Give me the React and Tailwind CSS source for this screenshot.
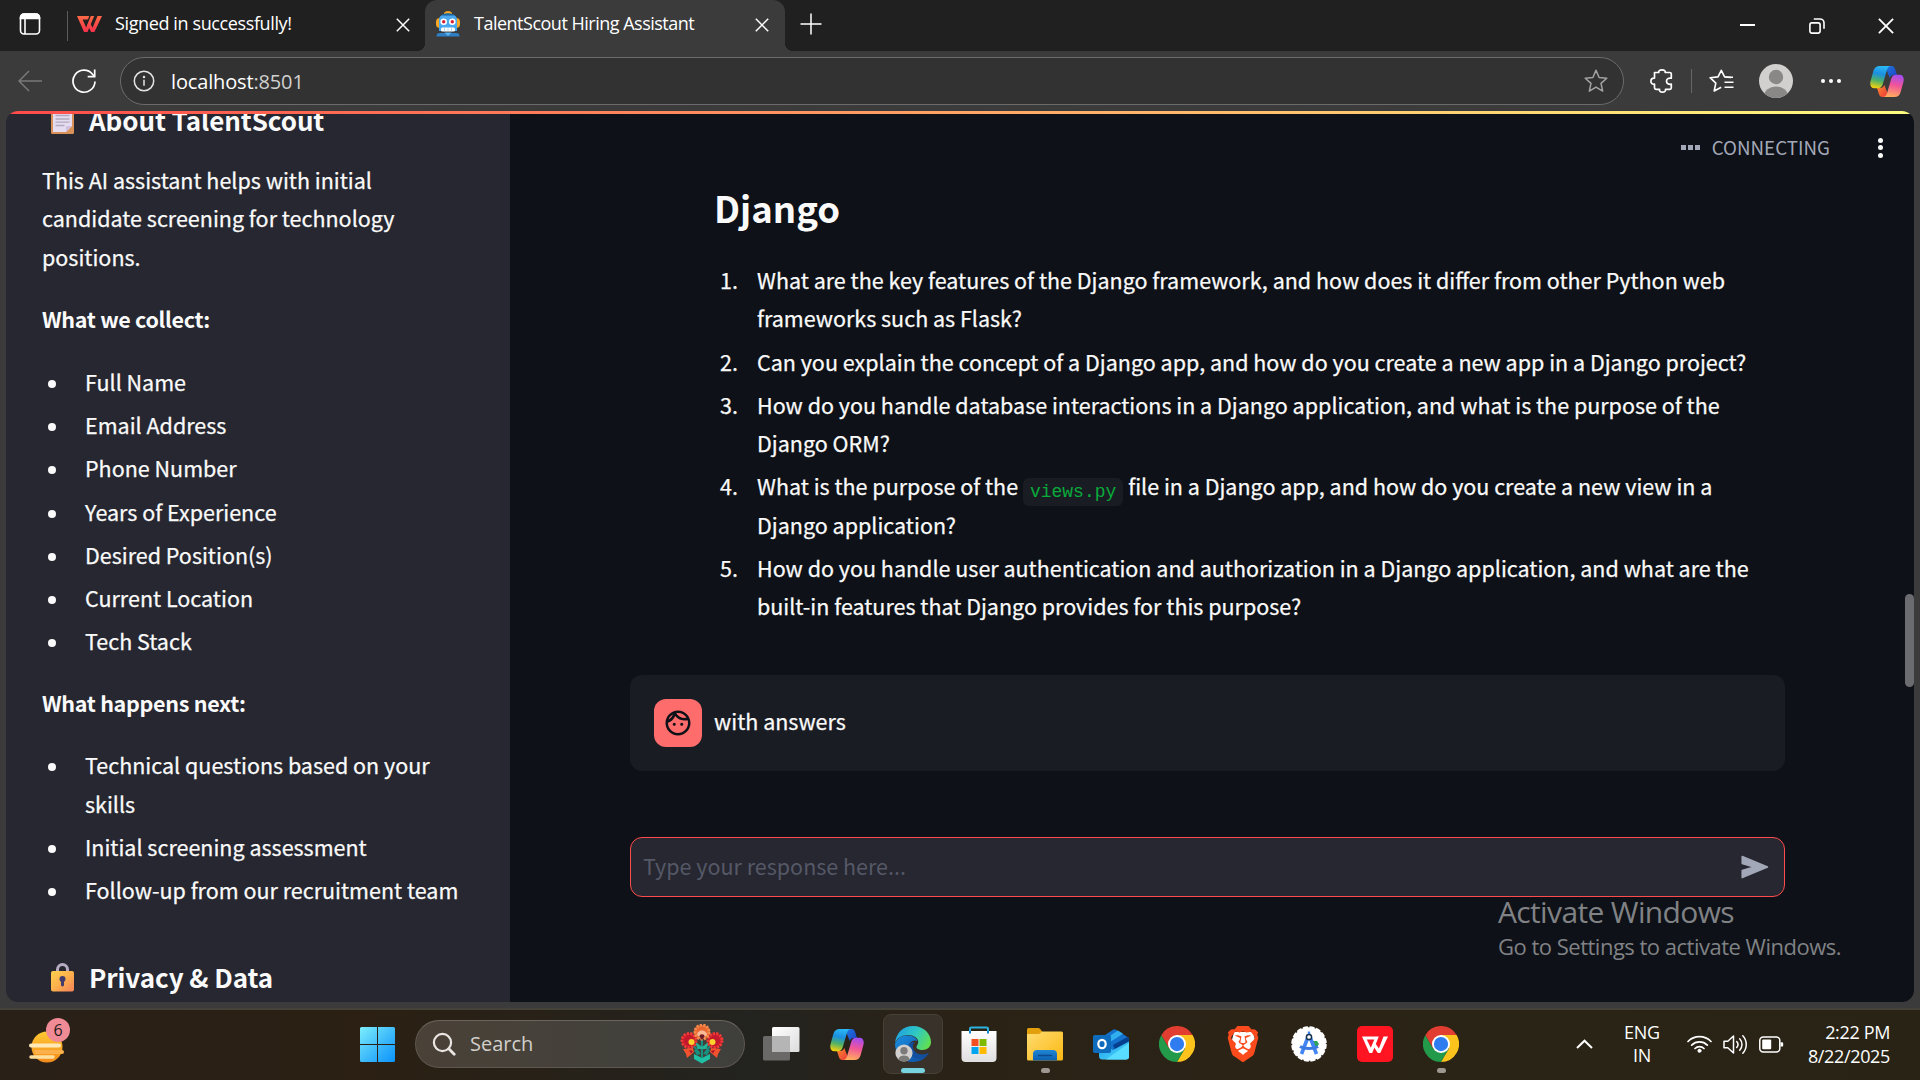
import { MdOutlineFace } from "react-icons/md";
import { SiBrave } from "react-icons/si";

const SOURCE = "font-['Noto_Sans_CJK_SC','Source_Sans_Pro',sans-serif]";
const SEGOE = "font-['Open_Sans','Segoe_UI',sans-serif]";

/* ---------- browser chrome icons ---------- */

const WorkspaceIcon = () => (
  <svg width="22" height="22" viewBox="0 0 22 22" fill="none" stroke="#fff" strokeWidth="1.6">
    <rect x="1.500" y="1" width="19" height="20" rx="3.5" />
    <path d="M1.500 5.500V4.500a3.500 3.500 0 0 1 3.500-3.500h12a3.500 3.500 0 0 1 3.500 3.500v1z" fill="#fff" />
    <path d="M6 5.500v15.500" />
  </svg>
);

const WpsMark = () => (
  <svg width="25" height="18" viewBox="0 0 25 18" fill="none">
    <defs>
      <linearGradient id="wps" x1="0" y1="0" x2="0" y2="1">
        <stop offset="0" stopColor="#ff6a45" />
        <stop offset="1" stopColor="#f5304c" />
      </linearGradient>
    </defs>
    <path d="M0 1h12.2l-1.2 3.4H5.6l3.6 8.2L13.800 1h3.400L10.500 17H7z" fill="url(#wps)" />
    <path d="M12 6.500l3.600 6.300L20.500 1H25l-7.600 16h-3.300L10.500 9.800z" fill="url(#wps)" />
  </svg>
);

const CloseIcon = ({ size = 14, w = 1.5 }) => (
  <svg width={size} height={size} viewBox="0 0 14 14" stroke="#fff" strokeWidth={w}>
    <path d="M.8.8l12.400 12.400M13.200.8L.8 13.200" />
  </svg>
);

const RobotIcon = () => (
  <svg width="26" height="26" viewBox="0 0 26 26">
    <rect x="1" y="7" width="24" height="10" rx="4" fill="#f5a623" />
    <path d="M9 2.500C9 1 11 0 13 0s4 1 4 2.500V5H9z" fill="#f5a623" />
    <path d="M4 9c0-4 3.500-6.500 9-6.500S22 5 22 9v11H4z" fill="#4aa8ee" />
    <path d="M6 4.500C8 3 10 2.500 13 2.500s5 .5 7 2z" fill="#1f5f9c" />
    <circle cx="8.700" cy="10.700" r="3.300" fill="#fff" />
    <circle cx="17.300" cy="10.700" r="3.300" fill="#fff" />
    <circle cx="8.700" cy="10.700" r="1.700" fill="#d6203a" />
    <circle cx="17.300" cy="10.700" r="1.700" fill="#d6203a" />
    <rect x="6" y="16.500" width="14" height="4" rx="1.500" fill="#fff" />
    <path d="M9.500 16.500v4M13 16.500v4M16.500 16.500v4" stroke="#9ec9ee" strokeWidth=".8" />
    <path d="M1.500 25.500c0-2.500 1-3.500 3.500-3.500h16c2.500 0 3.500 1 3.500 3.500z" fill="#2f7fc6" />
    <path d="M9.500 21.500h7L13 25z" fill="#59b4f2" />
  </svg>
);

const PlusIcon = () => (
  <svg width="22" height="22" viewBox="0 0 22 22" stroke="#fff" strokeWidth="1.5">
    <path d="M11 .5v21M.5 11h21" />
  </svg>
);

const RestoreIcon = () => (
  <svg width="16" height="16" viewBox="0 0 16 16" fill="none" stroke="#fff" strokeWidth="1.600">
    <rect x=".9" y="4.900" width="10.200" height="10.200" rx="2" />
    <path d="M4.800 1h6.200a4 4 0 0 1 4 4v5.800" />
  </svg>
);

const BackIcon = () => (
  <svg width="24" height="22" viewBox="0 0 24 22" fill="none" stroke="#7a7a7a" strokeWidth="1.500">
    <path d="M11 1L1 11l10 10M1 11h23" />
  </svg>
);

const ReloadIcon = () => (
  <svg width="26" height="26" viewBox="0 0 26 26" fill="none" stroke="#fff" strokeWidth="1.700">
    <path d="M24 13.500A11 11 0 1 1 21.500 6.200L23.500 8.500" />
    <path d="M23.700 1.500v7.200h-7" />
  </svg>
);

const InfoIcon = () => (
  <svg width="22" height="22" viewBox="0 0 22 22" fill="none" stroke="#e4e4e4" strokeWidth="1.500">
    <circle cx="11" cy="11" r="9.700" />
    <path d="M11 9.800v6" />
    <circle cx="11" cy="7" r=".5" fill="#e4e4e4" />
  </svg>
);

const STAR = "M12 1.300l3.100 7.200 7.700.7-5.800 5.200 1.700 7.700L12 18.100l-6.700 4 1.700-7.700L1.200 9.200l7.700-.7z";

const StarIcon = () => (
  <svg width="24" height="24" viewBox="0 0 24 24" fill="none" stroke="#a3a3a3" strokeWidth="1.500" strokeLinejoin="round">
    <path d={STAR} />
  </svg>
);

const PuzzleIcon = () => (
  <svg width="23" height="24" viewBox="0 0 23 24" fill="none" stroke="#fff" strokeWidth="1.700" strokeLinejoin="round">
    <path d="M4.500 3.500h4.300C8.300 1.800 9.600.9 12 .9s3.700.9 3.200 2.600h4.600a1.500 1.500 0 0 1 1.500 1.500v4.200c-2.600-.5-4.800.6-4.800 3s2.200 3.500 4.800 3v3.600a1.500 1.500 0 0 1-1.500 1.500h-4.300c.3 1.700-.8 2.800-3 2.800s-3.300-1.100-3-2.800H6a1.500 1.500 0 0 1-1.500-1.500v-3.600C2.400 15.600.9 14.400.9 12.200s1.500-3.400 3.600-3z" />
  </svg>
);

const FavoritesIcon = () => (
  <svg width="25" height="24" viewBox="0 0 25 24" fill="none" stroke="#fff" strokeWidth="1.600" strokeLinejoin="round">
    <path d="M22 8.500l-6.400-.6L12.300 1.300 9 7.900l-7.900.8 5.700 5.400L5.200 22l7-3.700" />
    <path d="M16.500 8.200H24M15.500 13.200H24.500M15.500 18.200H24.500" />
  </svg>
);

const AvatarIcon = () => (
  <svg width="34" height="34" viewBox="0 0 34 34">
    <defs>
      <clipPath id="avatarClip"><circle cx="17" cy="17" r="17" /></clipPath>
    </defs>
    <g clipPath="url(#avatarClip)">
      <rect width="34" height="34" fill="#d2d0ce" />
      <circle cx="17" cy="13" r="7.200" fill="#8a8886" />
      <ellipse cx="17" cy="32" rx="12" ry="9.500" fill="#8a8886" />
    </g>
  </svg>
);

const CopilotIcon = () => (
  <svg width="34" height="31" viewBox="0 0 34 31">
    <defs>
      <linearGradient id="cpA" x1=".5" y1="0" x2=".3" y2="1">
        <stop offset="0" stopColor="#2bb8f5" />
        <stop offset=".35" stopColor="#1b8fe0" />
        <stop offset=".65" stopColor="#4cb06a" />
        <stop offset="1" stopColor="#f7d10c" />
      </linearGradient>
      <linearGradient id="cpB" x1=".6" y1="0" x2=".4" y2="1">
        <stop offset="0" stopColor="#a44df0" />
        <stop offset=".45" stopColor="#f0549a" />
        <stop offset="1" stopColor="#ffae5c" />
      </linearGradient>
      <linearGradient id="cpC" x1="0" y1="0" x2="1" y2="1">
        <stop offset="0" stopColor="#1f77dc" />
        <stop offset="1" stopColor="#1c3fc4" />
      </linearGradient>
      <linearGradient id="cpD" x1="0" y1="0" x2="1" y2="1">
        <stop offset="0" stopColor="#f98b2b" />
        <stop offset="1" stopColor="#ee3b3b" />
      </linearGradient>
    </defs>
    <path d="M17 0h4.500c2 0 3 1 3.600 3l1.900 6h-3c-2.500 0-3.500 1-4.300 3L17 5z" fill="url(#cpC)" />
    <path d="M17 31h-4.500c-2 0-3-1-3.600-3L7 22h3c2.500 0 3.500-1 4.300-3L17 26z" fill="url(#cpD)" />
    <path d="M9.500 0H21c-2 0-3.300 1.500-4 3.800L12.800 18c-1 3-2.300 4.300-5 4.300H4.500C1 22.300-.5 19 .6 15L3.500 4.500C4.500 1.500 6.500 0 9.500 0z" fill="url(#cpA)" />
    <path d="M24.500 31H13c2 0 3.300-1.500 4-3.800L21.200 13c1-3 2.300-4.300 5-4.300h3.300c3.500 0 5 3.300 3.900 7.300L30.500 26.500c-1 3-3 4.500-6 4.500z" fill="url(#cpB)" />
  </svg>
);

/* ---------- page icons ---------- */

const MemoIcon = () => (
  <svg width="23" height="28" viewBox="0 0 23 28">
    <rect width="23" height="28" rx="1.500" fill="#d9915a" />
    <path d="M2 2h19v18l-6 6H2z" fill="#e6dcf2" />
    <path d="M21 20l-6 6v-4.500c0-1 .5-1.500 1.500-1.500z" fill="#cfc0dd" />
    <path d="M4.500 6h14M4.500 9.500h14M4.500 13h14M4.500 16.200h14M4.500 19.500h9" stroke="#b3a9bd" strokeWidth="1.300" />
  </svg>
);

const LockIcon = () => (
  <svg width="23" height="30" viewBox="0 0 23 30">
    <defs>
      <linearGradient id="lock" x1="0" y1="0" x2="1" y2="1">
        <stop offset="0" stopColor="#ffd04e" />
        <stop offset=".5" stopColor="#fbb04c" />
        <stop offset="1" stopColor="#f5825a" />
      </linearGradient>
    </defs>
    <path d="M6.500 10V7.500a5 5 0 0 1 10 0V10" fill="none" stroke="#b6abc2" strokeWidth="3" />
    <rect y="9" width="23" height="20.500" rx="2" fill="url(#lock)" />
    <circle cx="11.500" cy="17" r="3" fill="#433b6b" />
    <rect x="10" y="17" width="3" height="7.500" rx="1.400" fill="#433b6b" />
  </svg>
);

const SendIcon = () => (
  <svg width="28" height="24" viewBox="0 0 28 24" fill="#a3a8b8" stroke="#a3a8b8" strokeWidth="1.500" strokeLinejoin="round">
    <path d="M1.200 1.400L26.500 12 1.200 22.600V15.500L13 12 1.200 8.500z" />
  </svg>
);

/* ---------- taskbar icons ---------- */

const WeatherIcon = () => (
  <svg width="42" height="44" viewBox="0 0 42 44">
    <defs>
      <linearGradient id="sun" x1="0" y1="0" x2="0" y2="1">
        <stop offset="0" stopColor="#ffc933" />
        <stop offset="1" stopColor="#f28a1c" />
      </linearGradient>
    </defs>
    <circle cx="19" cy="25" r="15.500" fill="url(#sun)" />
    <path d="M3 23.500h28" stroke="#ffe9b8" strokeWidth="4" strokeLinecap="round" />
    <path d="M8 30h26" stroke="#fbb04a" strokeWidth="4" strokeLinecap="round" />
    <path d="M3 35h22" stroke="#ffdf9c" strokeWidth="3.500" strokeLinecap="round" />
  </svg>
);

const StartIcon = () => (
  <svg width="35" height="35" viewBox="0 0 35 35">
    <defs>
      <linearGradient id="win" x1="0" y1="0" x2="35" y2="35" gradientUnits="userSpaceOnUse">
        <stop offset="0" stopColor="#7deefc" />
        <stop offset=".55" stopColor="#3cb9fa" />
        <stop offset="1" stopColor="#0a93fb" />
      </linearGradient>
    </defs>
    <path d="M1.500 0H17v17H0V1.500A1.500 1.500 0 0 1 1.500 0zM18 0h15.500A1.500 1.500 0 0 1 35 1.500V17H18zM0 18h17v17H1.500A1.500 1.500 0 0 1 0 33.500zM18 18h17v15.500a1.500 1.500 0 0 1-1.500 1.500H18z" fill="url(#win)" />
  </svg>
);

const SearchIcon = () => (
  <svg width="24" height="24" viewBox="0 0 24 24" fill="none" stroke="#e9e6e3" strokeWidth="2.200" strokeLinecap="round">
    <circle cx="10.500" cy="10.500" r="8.600" />
    <path d="M16.800 16.800l5.400 5.400" strokeWidth="2.800" />
  </svg>
);

const FlowerIcon = () => (
  <svg width="44" height="40" viewBox="0 0 44 40">
    <path d="M14 30l8 4 8-4v5l-8 4.500L14 35z" fill="#1fbfa4" />
    <path d="M22 34V15M20 30l-7-9M24 30l7-9M18 31l-3-5M26 31l3-5" stroke="#17917f" strokeWidth="2" fill="none" />
    <path d="M14.500 17l7.500 6 7.500-6-3 8h-9z" fill="#25b096" />
    <g fill="#c4182c">
      <circle cx="9" cy="16.500" r="7.500" />
      <circle cx="35" cy="16.500" r="7.500" />
    </g>
    <g fill="none" stroke="#ef3b35" strokeWidth="3" strokeDasharray="2.200 1.200">
      <circle cx="9" cy="16.500" r="7" />
      <circle cx="35" cy="16.500" r="7" />
    </g>
    <circle cx="11.500" cy="18" r="3" fill="#ffd32b" />
    <circle cx="32.500" cy="18" r="3" fill="#ffd32b" />
    <path d="M22 15c-5 0-8-3-8-7s3-7 8-7 8 3 8 7-3 7-8 7z" fill="#e8672f" />
    <circle cx="22" cy="8" r="7" fill="none" stroke="#f58a4e" strokeWidth="3" strokeDasharray="2.200 1.200" />
    <path d="M17 11c0-6 10-6 10 0l-5 4z" fill="#f9b996" />
    <path d="M19.500 12.500c0-3 5-3 5 0L22 16z" fill="#6d1a22" />
    <path d="M3 25l10-1 1 4-7 6-1-4zM41 25l-10-1-1 4 7 6 1-4z" fill="#f2512d" />
    <path d="M9 26l4 1-2 2.500zM35 26l-4 1 2 2.500z" fill="#a3142a" />
  </svg>
);

const TaskViewIcon = () => (
  <svg width="37" height="34" viewBox="0 0 37 34">
    <defs>
      <linearGradient id="tv" x1="0" y1="0" x2="1" y2="1">
        <stop offset="0" stopColor="#fff" />
        <stop offset="1" stopColor="#dcdcdc" />
      </linearGradient>
    </defs>
    <rect y="9" width="27" height="24.500" rx="1.500" fill="#6a6968" />
    <rect x="9" y="0" width="27.500" height="25" rx="1.500" fill="url(#tv)" />
    <path d="M9 9h18v16H10.500A1.500 1.500 0 0 1 9 23.500z" fill="#b5b5b5" />
  </svg>
);

const EdgeIcon = () => (
  <svg width="36" height="36" viewBox="0 0 36 36">
    <defs>
      <linearGradient id="edTop" x1="0" y1=".3" x2="1" y2=".7">
        <stop offset="0" stopColor="#1fa0e0" />
        <stop offset=".5" stopColor="#2fc8c4" />
        <stop offset="1" stopColor="#62e04a" />
      </linearGradient>
      <linearGradient id="edMid" x1="0" y1="0" x2="1" y2="1">
        <stop offset="0" stopColor="#1b8fe0" />
        <stop offset="1" stopColor="#0f4aa0" />
      </linearGradient>
    </defs>
    <path d="M0 17C1 7 8 0 18 0c11 0 18 8 18 16 0 5-4 8-8.500 8-4 0-6.500-1.700-6-3.500.3-1.200 1.800-2 1.800-5C23 12 19 9 13 9 7 9 2 12 0 17z" fill="url(#edTop)" />
    <path d="M0 18c2-6 7-8.500 12.500-8.500C19 9.500 22 13 22.500 15c-4-2-9 1-9 7 0 5 4 9 9 10 4 .6 8-1 10.500-3.500C30 33 24.500 36 18 36 8 36 0 28 0 18z" fill="url(#edMid)" />
    <path d="M13.500 21c-.5 7 4 11 9 11.500 4 .4 8-1.500 11-4.500.5-.6-.3-1.200-1-.8-6 2.800-13 .8-14.500-5.200-.5-2.500.3-4.500 1.500-6-3-.5-5.700 1.500-6 5z" fill="#12509f" />
    <circle cx="9" cy="27" r="8.600" fill="#d2d0ce" />
    <circle cx="9" cy="24.800" r="3.700" fill="#7d7b79" />
    <path d="M3.300 33.300c1-3 3-3.800 5.700-3.800s4.700.8 5.700 3.800C11.500 36.200 6.500 36.200 3.300 33.300z" fill="#7d7b79" />
  </svg>
);

const StoreIcon = () => (
  <svg width="36" height="36" viewBox="0 0 36 36">
    <defs>
      <linearGradient id="st" x1="0" y1="0" x2="0" y2="1">
        <stop offset="0" stopColor="#fff" />
        <stop offset="1" stopColor="#dfdfdf" />
      </linearGradient>
    </defs>
    <path d="M9 8V2.800c0-.8.500-1.300 1.300-1.300h15.400c.8 0 1.300.5 1.300 1.300V8" fill="none" stroke="#2bb4e0" strokeWidth="2" />
    <path d="M.5 5h35v27a4 4 0 0 1-4 4h-27a4 4 0 0 1-4-4z" fill="url(#st)" />
    <path d="M9 5v2.500M27 5v2.500" stroke="#1585c4" strokeWidth="2" />
    <path d="M10.500 13h7v7h-7z" fill="#f25022" />
    <path d="M18.500 13h7v7h-7z" fill="#7fba00" />
    <path d="M10.500 21h7v7h-7z" fill="#00a4ef" />
    <path d="M18.500 21h7v7h-7z" fill="#ffb900" />
  </svg>
);

const FolderIcon = () => (
  <svg width="36" height="33" viewBox="0 0 36 33">
    <defs>
      <linearGradient id="fo" x1="0" y1="0" x2="1" y2="1">
        <stop offset="0" stopColor="#ffdc73" />
        <stop offset="1" stopColor="#fbb810" />
      </linearGradient>
      <linearGradient id="fob" x1="0" y1="0" x2="0" y2="1">
        <stop offset="0" stopColor="#1f86d6" />
        <stop offset="1" stopColor="#0f61b0" />
      </linearGradient>
    </defs>
    <path d="M0 1.500A1.500 1.500 0 0 1 1.500 0h9.700c.8 0 1.300.2 1.800.8L15.500 4H34a2 2 0 0 1 2 2v6H0z" fill="#e2a00c" />
    <path d="M0 6h11.500c.8 0 1.300-.2 1.800-.8L15 3.500h19.500A1.500 1.500 0 0 1 36 5v26a1.500 1.500 0 0 1-1.500 1.500h-33A1.500 1.500 0 0 1 0 31z" fill="url(#fo)" />
    <path d="M6 32.500V26a4 4 0 0 1 4-4h16a4 4 0 0 1 4 4v6.500z" fill="url(#fob)" />
    <path d="M11.500 27.500h13" stroke="#0b4a8c" strokeWidth="1.600" strokeLinecap="round" />
  </svg>
);

const OutlookIcon = () => (
  <svg width="36" height="31" viewBox="0 0 36 31">
    <defs>
      <linearGradient id="olE" x1="0" y1="0" x2="1" y2="1">
        <stop offset="0" stopColor="#1a9be6" />
        <stop offset="1" stopColor="#52dcff" />
      </linearGradient>
    </defs>
    <path d="M6 10L20 .8c1-.7 2-.7 3 0L36 9v4L20 22 6 15z" fill="#1372cd" />
    <path d="M12 10l13-8.500 5 3.200L14 15z" fill="#31aef0" />
    <path d="M20 16L34.500 8 36 9.500v4L22 21z" fill="#063f8e" />
    <path d="M6 14l14 7 16-8.500V27a3.500 3.500 0 0 1-3.500 3.500H9.500A3.500 3.500 0 0 1 6 27z" fill="url(#olE)" />
    <path d="M13 30.500L36 14v13.500a3 3 0 0 1-3 3z" fill="#58dcff" />
    <rect y="6" width="18" height="18" rx="1.800" fill="#0f6cbd" />
    <ellipse cx="9" cy="15" rx="3.700" ry="4.200" fill="none" stroke="#fff" strokeWidth="2.200" />
  </svg>
);

const ChromeIcon = () => (
  <svg width="36" height="36" viewBox="0 0 48 48">
    <path d="M24 12h20.800A24 24 0 0 1 24 48L34.400 30z" fill="#fbc31c" />
    <path d="M13.600 30L3.200 12A24 24 0 0 0 24 48l10.400-18z" fill="#229a4a" />
    <path d="M24 12h20.800A24 24 0 0 0 3.200 12l10.400 18z" fill="#e23d31" />
    <circle cx="24" cy="24" r="12" fill="#fff" />
    <circle cx="24" cy="24" r="9.500" fill="#2e7cf0" />
  </svg>
);

const BraveIcon = () => (
  <span className="relative flex">
    <svg width="31" height="36" viewBox="0 0 31 36" className="absolute left-[2.500px] top-0">
      <path d="M6 6h19l2 8-5 14-6.500 5L9 28 4 14z" fill="#fff" />
    </svg>
    <SiBrave size={36} color="#fb4a1c" className="relative" />
  </span>
);

const StudioIcon = () => (
  <svg width="36" height="36" viewBox="0 0 36 36">
    <circle cx="18" cy="18" r="16.800" fill="#fff" stroke="#fff" strokeWidth="2" strokeDasharray="5 1.600" />
    <path d="M21 15h5l2 3-2 3h-5z" fill="#2fa35a" />
    <path d="M17 11l-6.500 17M19 11l6.500 17" stroke="#4285f4" strokeWidth="3.600" />
    <path d="M9 20.500c4.500 2.800 13.500 2.800 18 0" stroke="#3c7ae0" strokeWidth="3" fill="none" />
    <path d="M16.800 5.500h2.400v4h-2.400z" fill="#4285f4" />
    <circle cx="18" cy="11" r="2.600" fill="#fff" stroke="#16324f" strokeWidth="1.500" />
  </svg>
);

const WpsIcon = () => (
  <svg width="36" height="36" viewBox="0 0 36 36">
    <rect width="36" height="36" rx="5" fill="#ff1522" />
    <path d="M5 10.500h15l-1.300 3H9.800l4 8.300 4.800-11.300h3.200L15.200 27h-2.800z" fill="#fff" />
    <path d="M18.500 17.500l3.400 5 4.600-12H31L23.200 27h-2.400l-3.900-6z" fill="#fff" />
  </svg>
);

const CaretIcon = () => (
  <svg width="17" height="10" viewBox="0 0 17 10" fill="none" stroke="#fff" strokeWidth="2">
    <path d="M1 9l7.500-7.300L16 9" />
  </svg>
);

const WifiIcon = () => (
  <svg width="25" height="18" viewBox="0 0 25 18" fill="none" stroke="#fff" strokeWidth="1.700" strokeLinecap="round">
    <path d="M1 6.500a16.200 16.200 0 0 1 23 0M4.700 10.200a11 11 0 0 1 15.600 0M8 13.500a6.300 6.300 0 0 1 9 0" />
    <circle cx="12.500" cy="15.800" r="1.700" fill="#fff" strokeWidth=".6" />
  </svg>
);

const VolumeIcon = () => (
  <svg width="25" height="21" viewBox="0 0 25 21" fill="none" stroke="#fff" strokeWidth="1.500" strokeLinejoin="round" strokeLinecap="round">
    <path d="M1 7.200h3.800L10.500 2v17l-5.700-5.200H1z" />
    <path d="M13.700 7.500a4.500 4.500 0 0 1 0 6M16.700 4.700a8.500 8.500 0 0 1 0 11.600M19.800 1.800a12.700 12.700 0 0 1 0 17.400" />
  </svg>
);

const BatteryIcon = () => (
  <svg width="25" height="17" viewBox="0 0 25 17" fill="none" stroke="#fff" strokeWidth="1.500">
    <rect x=".8" y=".9" width="20" height="15" rx="3.500" />
    <rect x="3.200" y="3.500" width="9" height="9.800" rx="1" fill="#fff" stroke="none" />
    <path d="M21.500 6.200h1.500a1.200 1.200 0 0 1 1.200 1.200v2a1.200 1.200 0 0 1-1.200 1.200h-1.500z" fill="#fff" stroke="none" />
  </svg>
);

/* ---------- browser chrome ---------- */

function TabStrip() {
  return (
    <div className={`flex h-[51px] items-center bg-[#202020] text-[18px] text-white ${SEGOE}`}>
      <div className="ml-[19px] mt-[-3px] flex w-[48px]"><WorkspaceIcon /></div>
      <div className="mt-[1px] h-[30px] w-px bg-[#5c5c5c]" />
      <div className="flex h-[47px] w-[357px] self-start items-center pl-[9px]">
        <WpsMark />
        <span className="ml-[13px] flex-1 tracking-[-0.38px]">Signed in successfully!</span>
        <span className="mr-[15px] mt-[3px]"><CloseIcon /></span>
      </div>
      <div className="relative flex h-[51px] w-[360px] items-center rounded-t-xl bg-[#3b3b3b] pb-[4px] pl-[10px]">
        <span className="absolute -left-2 bottom-0 size-2 bg-[radial-gradient(circle_at_0_0,#202020_8px,#3b3b3b_8px)]" />
        <span className="absolute -right-2 bottom-0 size-2 bg-[radial-gradient(circle_at_100%_0,#202020_8px,#3b3b3b_8px)]" />
        <RobotIcon />
        <span className="ml-[13px] flex-1 whitespace-nowrap tracking-[-0.5px]">TalentScout Hiring Assistant</span>
        <span className="mr-[16px] mt-[3px]"><CloseIcon /></span>
      </div>
      <div className="ml-[15px] mt-[-4px] flex-1"><PlusIcon /></div>
      <div className="mr-[26px] flex items-center">
        <span className="mb-[2px] h-[2px] w-[15px] bg-white" />
        <span className="ml-[54px]"><RestoreIcon /></span>
        <span className="ml-[53px]"><CloseIcon size={16} w={1.6} /></span>
      </div>
    </div>
  );
}

function AddressBar() {
  return (
    <div className="flex h-[60px] items-center bg-[#3b3b3b]">
      <div className="ml-[18px] w-[53px]"><BackIcon /></div>
      <div className="w-[49px]"><ReloadIcon /></div>
      <div className="flex h-[48px] w-[1504px] items-center rounded-full border border-[#6b6b6b] bg-[#323232] pl-[12px] pr-[15px]">
        <InfoIcon />
        <span className={`ml-[16px] mt-[2px] flex-1 text-[20px] tracking-[-0.15px] text-white ${SEGOE}`}>
          localhost<span className="text-[#d0d0d0]">:8501</span>
        </span>
        <StarIcon />
      </div>
      <div className="ml-[26px]"><PuzzleIcon /></div>
      <div className="ml-[18px] h-[24px] w-px bg-[#666]" />
      <div className="ml-[17px]"><FavoritesIcon /></div>
      <div className="ml-[25px]"><AvatarIcon /></div>
      <div className="ml-[28px] flex gap-[4px]">
        <span className="size-[4px] rounded-full bg-white" />
        <span className="size-[4px] rounded-full bg-white" />
        <span className="size-[4px] rounded-full bg-white" />
      </div>
      <div className="ml-[29px]"><CopilotIcon /></div>
    </div>
  );
}

/* ---------- Streamlit page ---------- */

function BulletList({ items }) {
  return (
    <ul className="flex flex-col gap-[4.8px]">
      {items.map((item) => (
        <li key={item} className="flex">
          <span className="mt-[17px] ml-[6px] mr-[29px] size-[8px] shrink-0 rounded-full bg-[#fafafa]" />
          <span>{item}</span>
        </li>
      ))}
    </ul>
  );
}

function SidebarHeading({ icon, children, className }) {
  return (
    <h3 className={`flex h-[36px] items-center gap-[15px] pl-[9px] text-[26px] font-bold leading-[36px] tracking-[-0.08px] ${className}`}>
      {icon}
      <span>{children}</span>
    </h3>
  );
}

function Sidebar() {
  return (
    <aside className={`flex w-[504px] flex-col overflow-hidden bg-[#262730] px-[36px] text-[21.5px] leading-[38.4px] text-[#fafafa] [-webkit-text-stroke:0.25px] ${SOURCE}`}>
      <SidebarHeading icon={<MemoIcon />} className="-mt-[9px] shrink-0 [-webkit-text-stroke:0]">About TalentScout</SidebarHeading>
      <p className="mt-[22.8px] w-[360px]">This AI assistant helps with initial candidate screening for technology positions.</p>
      <p className="mt-[24px] font-bold tracking-[-0.3px] [-webkit-text-stroke:0]">What we collect:</p>
      <div className="mt-[24.6px]">
        <BulletList items={["Full Name", "Email Address", "Phone Number", "Years of Experience", "Desired Position(s)", "Current Location", "Tech Stack"]} />
      </div>
      <p className="mt-[23.2px] font-bold tracking-[-0.3px] [-webkit-text-stroke:0]">What happens next:</p>
      <div className="mt-[24px]">
        <BulletList items={["Technical questions based on your skills", "Initial screening assessment", "Follow-up from our recruitment team"]} />
      </div>
      <SidebarHeading icon={<LockIcon />} className="mt-[50px] shrink-0 [-webkit-text-stroke:0]">Privacy &amp; Data</SidebarHeading>
    </aside>
  );
}

const QUESTIONS = [
  "What are the key features of the Django framework, and how does it differ from other Python web frameworks such as Flask?",
  "Can you explain the concept of a Django app, and how do you create a new app in a Django project?",
  "How do you handle database interactions in a Django application, and what is the purpose of the Django ORM?",
  <>
    What is the purpose of the{" "}
    <code className="rounded-[6px] bg-[#1a1c24] px-[7px] py-[4px] align-[-2px] font-['Liberation_Mono',monospace] text-[18px] leading-none text-[#09ab3b] [-webkit-text-stroke:0]">views.py</code>{" "}
    file in a Django app, and how do you create a new view in a Django application?
  </>,
  "How do you handle user authentication and authorization in a Django application, and what are the built-in features that Django provides for this purpose?",
];

function Chat() {
  return (
    <main className={`relative flex-1 bg-[#0e1117] text-[21.5px] leading-[38.4px] text-[#fafafa] ${SOURCE}`}>
      <header className="flex h-[73px] items-center justify-end pr-[31px]">
        <div className="flex gap-[2px]">
          <span className="size-[5px] bg-[#a3a8b8]" />
          <span className="size-[5px] bg-[#a3a8b8]" />
          <span className="size-[5px] bg-[#a3a8b8]" />
        </div>
        <span className="ml-[12px] text-[18.770px] text-[#a3a8b8]">CONNECTING</span>
        <div className="ml-[48px] flex flex-col gap-[2.500px]">
          <span className="size-[5px] rounded-full bg-[#fafafa]" />
          <span className="size-[5px] rounded-full bg-[#fafafa]" />
          <span className="size-[5px] rounded-full bg-[#fafafa]" />
        </div>
      </header>
      <div className="ml-[120px] w-[1155px]">
        <section className="pl-[84px] pr-[24px]">
          <h2 className="text-[36.500px] font-bold leading-[48px]">Django</h2>
          <ol className="mt-[29px] flex flex-col gap-[4.800px] [-webkit-text-stroke:0.25px]">
            {QUESTIONS.map((q, i) => (
              <li key={i} className="flex">
                <span className="w-[43px] shrink-0 pl-[6px]">{i + 1}.</span>
                <span>{q}</span>
              </li>
            ))}
          </ol>
        </section>
        <section className="mt-[49px] flex h-[96px] items-center rounded-xl bg-[#1a1c24] px-[24px]">
          <span className="flex size-[48px] items-center justify-center rounded-xl bg-[#ff6c6c]">
            <MdOutlineFace size={30} color="#0e1117" />
          </span>
          <span className="-mt-[3px] ml-[12px] [-webkit-text-stroke:0.25px]">with answers</span>
        </section>
        <div className="mt-[66px] flex h-[60px] items-center justify-between rounded-xl border border-[#ff4b4b] bg-[#262730] pl-[12px] pr-[15px]">
          <span className="-mt-[2px] text-[#555867]">Type your response here...</span>
          <SendIcon />
        </div>
      </div>
      <div className={`absolute left-[988px] top-[779px] text-[#808285] ${SEGOE}`}>
        <p className="text-[30px] leading-[44px] tracking-[-0.640px]">Activate Windows</p>
        <p className="text-[22px] leading-[25px] tracking-[-0.500px]">Go to Settings to activate Windows.</p>
      </div>
      <div className="absolute right-0 top-[483px] h-[93px] w-[9px] rounded-full bg-[#6b6c70]" />
    </main>
  );
}

/* ---------- taskbar ---------- */

const APPS = [
  { id: "taskview", icon: <TaskViewIcon /> },
  { id: "copilot", icon: <CopilotIcon /> },
  { id: "edge", icon: <EdgeIcon />, active: true },
  { id: "store", icon: <StoreIcon /> },
  { id: "explorer", icon: <FolderIcon />, running: true },
  { id: "outlook", icon: <OutlookIcon /> },
  { id: "chrome", icon: <ChromeIcon /> },
  { id: "brave", icon: <BraveIcon /> },
  { id: "studio", icon: <StudioIcon /> },
  { id: "wps", icon: <WpsIcon /> },
  { id: "chrome-profile", icon: <ChromeIcon />, running: true },
];

function AppButton({ icon, active, running }) {
  return (
    <div className="flex w-[66px] justify-center">
      <div className={`relative flex size-[60px] items-center justify-center rounded-lg ${active ? "border border-[#474036] bg-[#38322a]" : ""}`}>
        {icon}
        {active && <span className="absolute bottom-0 h-[5px] w-[24px] rounded-full bg-[#76d2dc]" />}
        {running && <span className="absolute bottom-px h-[5px] w-[9px] rounded-full bg-[#9c9891]" />}
      </div>
    </div>
  );
}

function Taskbar() {
  return (
    <footer className={`flex h-[72px] items-center border-t-2 border-[#45423a] bg-[linear-gradient(90deg,#292018_0%,#2b2013_19%,#23231f_39%,#2b2216_50%,#2a2416_80%,#292315_100%)] pb-[2px] text-[18px] text-white ${SEGOE}`}>
      <div className="relative ml-[28px] w-[332px]">
        <WeatherIcon />
        <span className="absolute -top-[4px] left-[18px] flex size-[24px] items-center justify-center rounded-full bg-[#f08a94] text-[16px] text-[#1b1b1b]">6</span>
      </div>
      <StartIcon />
      <div className="ml-[20px] flex h-[48px] w-[330px] items-center rounded-full border border-[#5d574f] border-t-[#6b655d] bg-[linear-gradient(90deg,#4a4137,#43413b_60%,#3f3f3c)] pl-[16px] pr-[20px]">
        <SearchIcon />
        <span className="ml-[14px] flex-1 text-[20px] text-[#d2cfcb]">Search</span>
        <FlowerIcon />
      </div>
      <div className="ml-[3px] flex flex-1">
        {APPS.map((app) => <AppButton key={app.id} {...app} />)}
      </div>
      <CaretIcon />
      <div className="ml-[30px] flex w-[38px] flex-col items-center leading-[23px] tracking-[-0.200px]">
        <span>ENG</span>
        <span>IN</span>
      </div>
      <div className="ml-[26px] flex items-center gap-[11px]">
        <WifiIcon />
        <VolumeIcon />
        <BatteryIcon />
      </div>
      <div className="mr-[30px] flex w-[106px] flex-col items-end leading-[24px] tracking-[-0.350px]">
        <span>2:22 PM</span>
        <span>8/22/2025</span>
      </div>
    </footer>
  );
}

export default function App() {
  return (
    <div className="flex h-[1080px] w-[1920px] flex-col overflow-hidden bg-[#3b3b3b]">
      <TabStrip />
      <AddressBar />
      <div className="relative mx-[6px] mb-[6px] flex h-[891px] overflow-hidden rounded-xl">
        <Sidebar />
        <Chat />
        <div className="absolute inset-x-0 top-0 h-[3px] bg-[linear-gradient(90deg,#ff4b4b,#fffd80)]" />
      </div>
      <Taskbar />
    </div>
  );
}
